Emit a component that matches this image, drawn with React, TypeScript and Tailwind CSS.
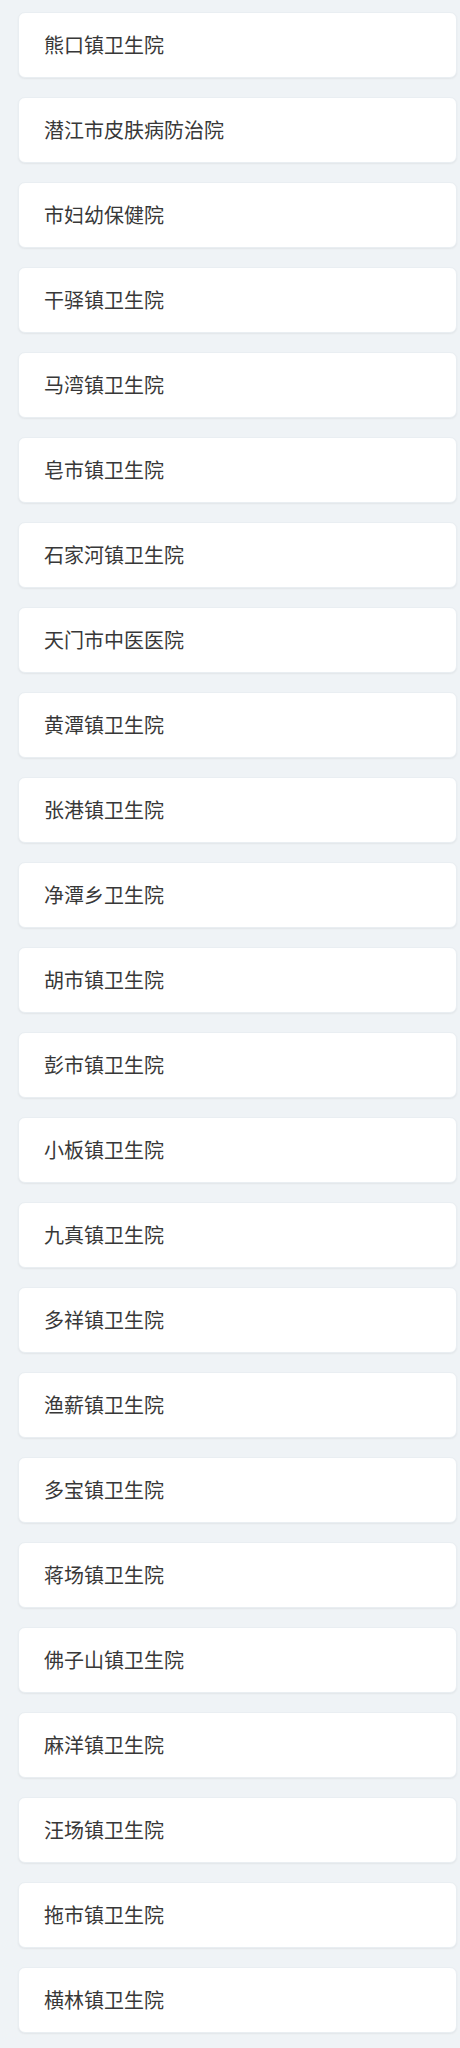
import React from "react";

const items = [
  "熊口镇卫生院",
  "潜江市皮肤病防治院",
  "市妇幼保健院",
  "干驿镇卫生院",
  "马湾镇卫生院",
  "皂市镇卫生院",
  "石家河镇卫生院",
  "天门市中医医院",
  "黄潭镇卫生院",
  "张港镇卫生院",
  "净潭乡卫生院",
  "胡市镇卫生院",
  "彭市镇卫生院",
  "小板镇卫生院",
  "九真镇卫生院",
  "多祥镇卫生院",
  "渔薪镇卫生院",
  "多宝镇卫生院",
  "蒋场镇卫生院",
  "佛子山镇卫生院",
  "麻洋镇卫生院",
  "汪场镇卫生院",
  "拖市镇卫生院",
  "横林镇卫生院",
];

export default function App() {
  return (
    <div
      className="min-h-[2048px] bg-[#eff3f6] pt-[12px] pb-[15px] pl-[18px] pr-[3px] flex flex-col gap-[19px]"
      style={{ fontFamily: '"Noto Sans CJK SC", "Noto Sans", sans-serif' }}
    >
      {items.map((name) => (
        <div
          key={name}
          className="h-[66px] flex items-center bg-white rounded-[7px] pl-[25px] text-[20px] text-[#383838] shadow-[0_1px_2px_rgba(0,0,0,0.06)] border border-[#e9eef2]"
        >
          {name}
        </div>
      ))}
    </div>
  );
}
